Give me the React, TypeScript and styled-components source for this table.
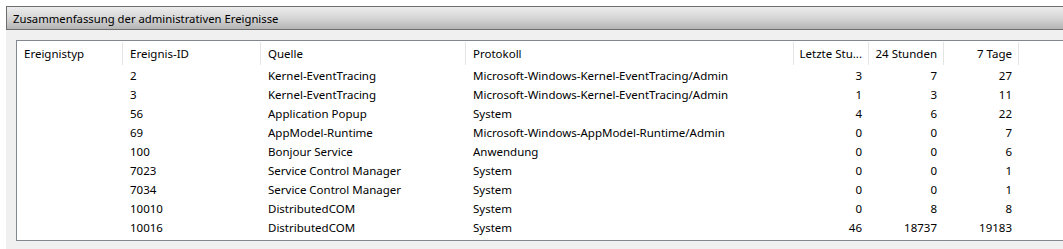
import React from "react";
import styled, { createGlobalStyle } from "styled-components";

const GlobalStyle = createGlobalStyle`
  html, body {
    margin: 0;
    padding: 0;
    background: #ffffff;
    overflow: hidden;
  }
  body {
    font-family: "Noto Sans", "Open Sans", sans-serif;
    font-size: 11.5px;
    color: #000;
  }
`;

const Panel = styled.div`
  margin: 6px 0 0 6px;
  height: 243px;
  background: #f0f0f0;
  overflow: hidden;
  display: flex;
  flex-direction: column;
`;

const TitleBar = styled.div`
  height: 22px;
  border-top: 1px solid #6d6d6d;
  border-bottom: 1px solid #6d6d6d;
  border-left: 1px solid #6d6d6d;
  background: linear-gradient(to bottom, #ececec 0%, #d6d6d6 50%, #b4b4b4 100%);
  display: flex;
  align-items: center;
  padding-left: 6px;
  white-space: nowrap;
  font-size: 11.3px;
`;

const Body = styled.div`
  padding: 10px 0 0 10px;
`;

const ListBox = styled.div`
  width: 1100px;
  height: 199px;
  background: #fff;
  border: 1px solid #828790;
  display: grid;
  grid-template-columns: 106px 138px 205px 328px 75px 75px 75px 1fr;
  grid-template-rows: 25px;
  grid-auto-rows: 19px;
  align-content: start;
`;

const HeadCell = styled.div<{ $right?: boolean; $last?: boolean }>`
  display: flex;
  align-items: center;
  justify-content: ${(p) => (p.$right ? "flex-end" : "flex-start")};
  padding: 0 6px 0 7px;
  margin: 1px 0 1px;
  border-right: ${(p) => (p.$last ? "none" : "1px solid #e5e5e5")};
  white-space: nowrap;
  overflow: hidden;
`;

const Row = styled.div`
  display: contents;
`;

const Cell = styled.div<{ $right?: boolean }>`
  display: flex;
  align-items: center;
  justify-content: ${(p) => (p.$right ? "flex-end" : "flex-start")};
  padding: 0 7px 0 7px;
  white-space: nowrap;
  overflow: hidden;
`;

type Entry = {
  id: string;
  source: string;
  log: string;
  hour: number;
  day: number;
  week: number;
};

const rows: Entry[] = [
  { id: "2", source: "Kernel-EventTracing", log: "Microsoft-Windows-Kernel-EventTracing/Admin", hour: 3, day: 7, week: 27 },
  { id: "3", source: "Kernel-EventTracing", log: "Microsoft-Windows-Kernel-EventTracing/Admin", hour: 1, day: 3, week: 11 },
  { id: "56", source: "Application Popup", log: "System", hour: 4, day: 6, week: 22 },
  { id: "69", source: "AppModel-Runtime", log: "Microsoft-Windows-AppModel-Runtime/Admin", hour: 0, day: 0, week: 7 },
  { id: "100", source: "Bonjour Service", log: "Anwendung", hour: 0, day: 0, week: 6 },
  { id: "7023", source: "Service Control Manager", log: "System", hour: 0, day: 0, week: 1 },
  { id: "7034", source: "Service Control Manager", log: "System", hour: 0, day: 0, week: 1 },
  { id: "10010", source: "DistributedCOM", log: "System", hour: 0, day: 8, week: 8 },
  { id: "10016", source: "DistributedCOM", log: "System", hour: 46, day: 18737, week: 19183 },
];

export default function App() {
  return (
    <>
      <GlobalStyle />
      <Panel>
        <TitleBar>Zusammenfassung der administrativen Ereignisse</TitleBar>
        <Body>
          <ListBox>
            <HeadCell>Ereignistyp</HeadCell>
            <HeadCell>Ereignis-ID</HeadCell>
            <HeadCell>Quelle</HeadCell>
            <HeadCell>Protokoll</HeadCell>
            <HeadCell $right>Letzte Stu...</HeadCell>
            <HeadCell $right>24 Stunden</HeadCell>
            <HeadCell $right>7 Tage</HeadCell>
            <HeadCell $last />
            {rows.map((r) => (
              <Row key={r.id}>
                <Cell />
                <Cell>{r.id}</Cell>
                <Cell>{r.source}</Cell>
                <Cell>{r.log}</Cell>
                <Cell $right>{r.hour}</Cell>
                <Cell $right>{r.day}</Cell>
                <Cell $right>{r.week}</Cell>
                <Cell />
              </Row>
            ))}
          </ListBox>
        </Body>
      </Panel>
    </>
  );
}
